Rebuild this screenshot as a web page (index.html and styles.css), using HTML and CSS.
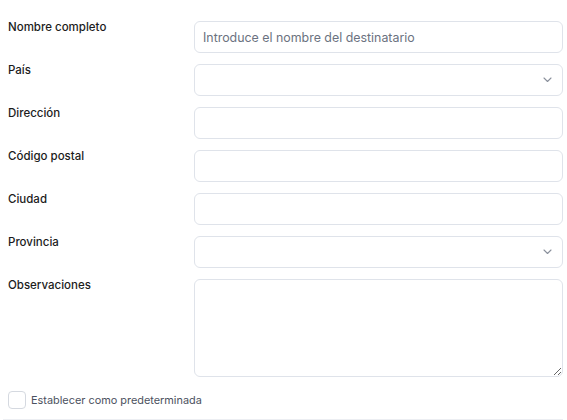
FILE: index.html
```html
<!DOCTYPE html>
<html lang="es">
<head>
<meta charset="utf-8">
<link rel="stylesheet" href="styles.css">
</head>
<body>
<form class="form">
  <div class="row">
    <label class="label">Nombre completo</label>
    <input class="field" type="text" placeholder="Introduce el nombre del destinatario">
  </div>
  <div class="row">
    <label class="label">País</label>
    <div class="select">
      <svg class="chev" width="9" height="6" viewBox="0 0 9 6"><path d="M1 1l3.5 3.5L8 1" fill="none" stroke="#8a909c" stroke-width="1.1" stroke-linecap="round" stroke-linejoin="round"/></svg>
    </div>
  </div>
  <div class="row">
    <label class="label">Dirección</label>
    <input class="field" type="text">
  </div>
  <div class="row">
    <label class="label">Código postal</label>
    <input class="field" type="text">
  </div>
  <div class="row">
    <label class="label">Ciudad</label>
    <input class="field" type="text">
  </div>
  <div class="row">
    <label class="label">Provincia</label>
    <div class="select">
      <svg class="chev" width="9" height="6" viewBox="0 0 9 6"><path d="M1 1l3.5 3.5L8 1" fill="none" stroke="#8a909c" stroke-width="1.1" stroke-linecap="round" stroke-linejoin="round"/></svg>
    </div>
  </div>
  <div class="row">
    <label class="label">Observaciones</label>
    <textarea class="area"></textarea>
  </div>
  <label class="check">
    <span class="box"></span>
    <span class="check-text">Establecer como predeterminada</span>
  </label>
  <div class="divider"></div>
</form>
</body>
</html>
```
FILE: styles.css
```css
* { box-sizing: border-box; }
html, body { margin: 0; background: #fff; }
body {
  font-family: Inter, "Noto Sans", sans-serif;
  color: #1f1f1f;
  width: 567px;
  height: 420px;
  overflow: hidden;
}
.form {
  padding: 21px 4px 0 8px;
  display: flex;
  flex-direction: column;
  gap: 11px;
}
.row {
  display: grid;
  grid-template-columns: 186px 369px;
  align-items: start;
}
.label {
  font-size: 11.5px;
  font-weight: 500;
  line-height: 14px;
  color: #1c1c1c;
  margin-top: -1px;
}
.field, .select, .area {
  width: 369px;
  height: 32px;
  border: 1px solid #dfe3ea;
  border-radius: 6px;
  background: #fff;
  font-family: inherit;
  font-size: 12.4px;
  padding: 0 8px;
  outline: none;
  margin: 0;
}
.field::placeholder { color: #6b7280; }
.select {
  display: flex;
  align-items: center;
  justify-content: flex-end;
  padding-right: 10px;
}
.area {
  height: 98px;
  resize: vertical;
  display: block;
}
.check {
  display: flex;
  align-items: center;
  gap: 5px;
  margin-top: 3px;
}
.box {
  width: 18px;
  height: 18px;
  border: 1px solid #d5d9e0;
  border-radius: 4px;
  background: #fff;
}
.check-text {
  font-size: 10.9px;
  color: #4b5160;
}
.divider {
  margin: -1px 0 0 -5px;
  height: 1px;
  background: #eceef2;
}
```
